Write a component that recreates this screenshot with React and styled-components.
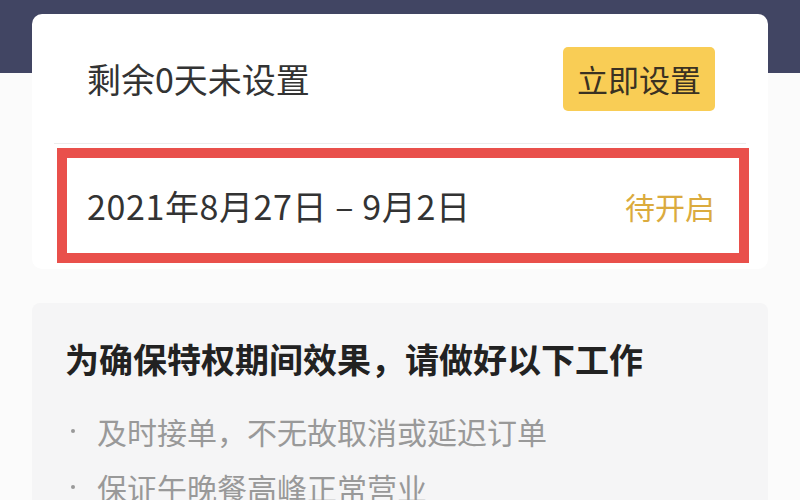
import styled, { createGlobalStyle } from "styled-components";

const GlobalStyle = createGlobalStyle`
  html, body {
    margin: 0;
    padding: 0;
    background: #fbfbfb;
    font-family: "Noto Sans CJK SC", "Noto Sans", sans-serif;
  }
`;

const tips = ["及时接单，不无故取消或延迟订单", "保证午晚餐高峰正常营业"];

export default function App() {
  return (
    <>
      <GlobalStyle />
      <Page>
        <Header />
        <Card>
          <TopRow>
            <Remain>剩余0天未设置</Remain>
            <SetButton>立即设置</SetButton>
          </TopRow>
          <Divider />
          <DateRow>
            <DateText>2021年8月27日 – 9月2日</DateText>
            <Status>待开启</Status>
          </DateRow>
        </Card>
        <Notice>
          <NoticeTitle>为确保特权期间效果，请做好以下工作</NoticeTitle>
          <TipList>
            {tips.map((t) => (
              <Tip key={t}>
                <Dot />
                {t}
              </Tip>
            ))}
          </TipList>
        </Notice>
      </Page>
    </>
  );
}

const Page = styled.div`
  position: relative;
  width: 800px;
  height: 500px;
  overflow: hidden;
  background: #fbfbfb;
  display: flex;
  flex-direction: column;
  padding: 14px 32px 0;
  box-sizing: border-box;
`;

// dark band behind the top of the card
const Header = styled.div`
  position: absolute;
  left: 0;
  top: 0;
  width: 100%;
  height: 73px;
  background: #414563;
`;

const Card = styled.div`
  position: relative;
  background: #fff;
  border-radius: 10px;
  padding-bottom: 6px;
`;

const TopRow = styled.div`
  height: 129px;
  display: flex;
  align-items: center;
  justify-content: space-between;
  padding: 0 53px 0 55px;
`;

const Remain = styled.div`
  font-size: 34px;
  color: #333;
`;

const SetButton = styled.button`
  width: 152px;
  height: 64px;
  border: none;
  border-radius: 5px;
  background: #f9cd55;
  color: #3a3122;
  font-family: inherit;
  font-size: 31px;
  padding: 0;
`;

const Divider = styled.div`
  height: 1px;
  margin: 0 22px;
  background: #ececec;
`;

const DateRow = styled.div`
  height: 95px;
  margin: 4px 19px 0 25px;
  border: 10px solid #e9504b;
  display: flex;
  align-items: center;
  justify-content: space-between;
  padding: 0 24px 0 20px;
`;

const DateText = styled.div`
  font-size: 34px;
  color: #333;
  letter-spacing: 0.6px;
`;

const Status = styled.div`
  font-size: 30px;
  color: #dbab3e;
`;

const Notice = styled.div`
  margin-top: 34px;
  flex: 1;
  background: #f5f5f6;
  border-radius: 8px 8px 0 0;
  padding: 32px 33px 0;
`;

const NoticeTitle = styled.div`
  font-size: 34px;
  line-height: 48px;
  font-weight: 700;
  color: #222;
`;

const TipList = styled.div`
  margin-top: 20px;
  display: flex;
  flex-direction: column;
`;

const Tip = styled.div`
  display: flex;
  align-items: center;
  font-size: 30px;
  line-height: 56px;
  color: #999;
`;

const Dot = styled.span`
  width: 32px;
  flex-shrink: 0;
  display: flex;
  align-items: center;

  &::before {
    content: "";
    width: 4px;
    height: 4px;
    margin-left: 6px;
    border-radius: 50%;
    background: #999;
  }
`;
